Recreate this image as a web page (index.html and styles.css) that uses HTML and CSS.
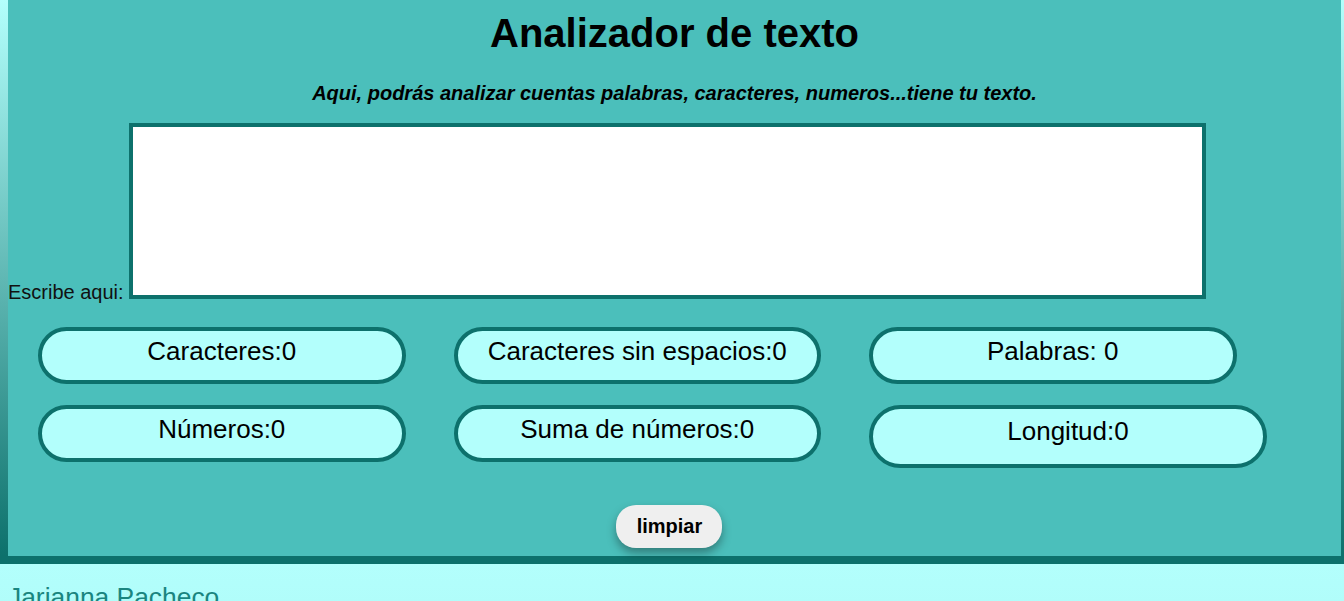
FILE: index.html
```html
<!DOCTYPE html>
<html lang="es">
<head>
<meta charset="utf-8">
<title>Analizador de texto</title>
<link rel="stylesheet" href="styles.css">
</head>
<body>
<div class="page">
  <main class="card">
    <h1 class="title">Analizador de texto</h1>
    <p class="subtitle">Aqui, podrás analizar cuentas palabras, caracteres, numeros...tiene tu texto.</p>
    <div class="input-row">
      <label class="input-label" for="texto">Escribe aqui:</label>
      <textarea id="texto" class="input-area"></textarea>
    </div>
    <div class="stats">
      <div class="stat">Caracteres:0</div>
      <div class="stat">Caracteres sin espacios:0</div>
      <div class="stat">Palabras: 0</div>
      <div class="stat">Números:0</div>
      <div class="stat">Suma de números:0</div>
      <div class="stat stat-wide">Longitud:0</div>
    </div>
    <div class="actions">
      <button class="clear-btn" type="button">limpiar</button>
    </div>
  </main>
</div>
<footer class="footer">
  <p class="author">Jarianna Pacheco</p>
</footer>
</body>
</html>
```

FILE: styles.css
```css
html, body {
  margin: 0;
  padding: 0;
}

body {
  font-family: "Liberation Sans", Arial, sans-serif;
  background: #aef9f6;
  overflow: hidden;
}

.page {
  background: linear-gradient(to bottom, #b3fffc 0px, #0d716c 556px);
  padding: 0 3px 0 8px;
  border-bottom: 8px solid #0d716c;
}

.card {
  background: #4bbfbb;
  padding: 10px 0 8px;
}

.title {
  margin: 0;
  font-size: 40px;
  font-weight: bold;
  text-align: center;
  color: #000;
  line-height: 46px;
}

.subtitle {
  margin: 26px 0 0;
  font-size: 20px;
  font-weight: bold;
  font-style: italic;
  text-align: center;
  color: #000;
  line-height: 23px;
}

.input-row {
  margin-top: 18px;
  font-size: 20px;
  line-height: 23px;
  color: #111;
}

.input-label {
  font-size: 20px;
}

.input-area {
  box-sizing: border-box;
  width: 1077px;
  height: 176px;
  margin: 0;
  border: 4px solid #0d716c;
  background: #fff;
  resize: none;
  vertical-align: baseline;
}

.stats {
  display: flex;
  flex-wrap: wrap;
  column-gap: 48px;
  row-gap: 21px;
  padding: 0 0 0 30px;
  margin-top: 23px;
  width: 1240px;
  align-items: flex-start;
}

.stat {
  box-sizing: border-box;
  width: 367.5px;
  height: 57px;
  padding-top: 5px;
  border: 4px solid #0d716c;
  border-radius: 30px;
  background: #b3fffc;
  color: #000;
  font-size: 26px;
  line-height: 30px;
  text-align: center;
}

.stat-wide {
  width: 398px;
  height: 63px;
  padding-top: 7px;
  border-radius: 32px;
}

.actions {
  margin-top: 37px;
  text-align: center;
  padding-right: 11px;
}

.clear-btn {
  font-family: "Liberation Sans", Arial, sans-serif;
  font-size: 20px;
  font-weight: bold;
  line-height: 23px;
  color: #000;
  background: #efefef;
  border: none;
  border-radius: 20px;
  padding: 10px 20px 10px 21px;
  box-shadow: 0 5px 10px rgba(0, 0, 0, 0.35);
  vertical-align: top;
}

.footer {
  background: linear-gradient(to bottom, #b3fffc, #a6f3f1);
  padding: 18px 8px;
  height: 200px;
}

.author {
  margin: 0;
  font-size: 26.4px;
  line-height: 30px;
  color: #1a857f;
}
```
